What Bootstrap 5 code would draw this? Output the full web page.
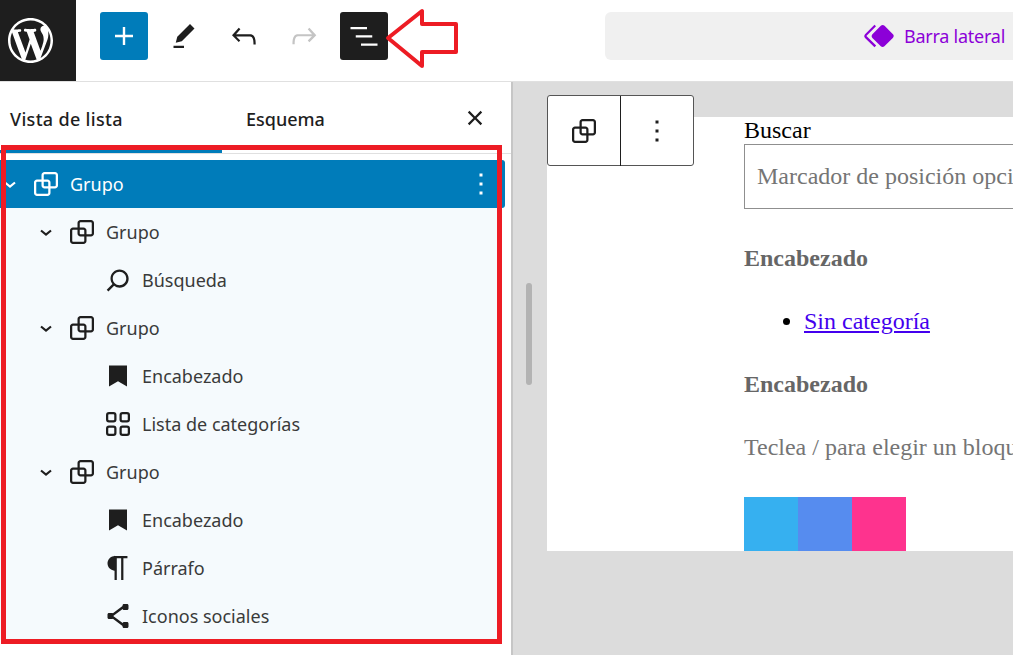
<!DOCTYPE html>
<html lang="es">
<head>
<meta charset="utf-8">
<title>Vista de lista</title>
<link href="https://cdn.jsdelivr.net/npm/bootstrap@5.3.0/dist/css/bootstrap.min.css" rel="stylesheet">
<style>
html,body{height:100%;overflow:hidden;background:#fff;}
body{font-family:"Noto Sans","Open Sans",sans-serif;color:#1e1e1e;position:relative;width:1013px;height:655px;}
svg{fill:currentColor;flex:none;display:block;}
.wp-top{height:82px;border-bottom:1px solid #e0e0e0;}
.wp-logo{width:76px;height:81px;flex:none;background:#1e1e1e;color:#fff;padding-left:8px;}
.wp-tools{padding-left:24px;gap:12px;margin-top:12px;}
.wp-tool{width:48px;height:48px;border:0;padding:0;border-radius:3px;background:transparent;color:#1e1e1e;}
.wp-tool.is-blue{background:#007cba;color:#fff;}
.wp-tool.is-dark{background:#1e1e1e;color:#fff;}
.wp-tool.is-off{color:#c4c4c4;}
.wp-command{margin:12px 0 0 217px;width:640px;height:48px;flex:none;background:#f0f0f0;border-radius:6px;color:#8c00d8;font-size:18px;letter-spacing:-.25px;padding-left:256px;gap:7px;}
.wp-main{height:573px;}
.wp-side{width:513px;flex:none;border-right:2px solid #c6c6c6;}
.wp-tabs{height:72px;border-bottom:1px solid #e0e0e0;position:relative;font-size:18px;font-weight:500;}
.wp-tab{height:71px;padding-top:21px;line-height:32px;}
.wp-tab-a{width:222px;padding-left:10px;border-bottom:3px solid #007cba;letter-spacing:.32px;}
.wp-tab-b{width:235px;padding-left:24px;}
.wp-close{width:36px;height:36px;margin-top:18px;}
.wp-list{padding-top:6px;font-size:18px;}
.wp-row{height:48px;color:#3a3a3a;}
.wp-row.is-sel{background:#007cba;color:#fff;width:505px;border-radius:0 3px 3px 0;}
.wp-tint{background:#f5fafd;width:500px;height:432px;}
.d0{padding-left:0;}
.d1{padding-left:34px;}
.d2{padding-left:100px;}
.wp-chev{width:24px;height:24px;color:#1e1e1e;fill:none;stroke:currentColor;stroke-width:2.2;}
.is-sel .wp-chev{color:#fff;margin-left:-2px;}
.wp-ic{width:36px;height:36px;color:#1e1e1e;}
.is-sel .wp-ic{color:#fff;}
.wp-chev + .wp-ic{margin-left:6px;}
.wp-lbl{padding-left:6px;}
.wp-kebab{margin-right:6px;}
.wp-canvas{flex:1 1 auto;background:#dcdcdc;position:relative;overflow:hidden;padding:35px 0 0 34px;}
.wp-page{width:700px;height:434px;background:#fff;padding-left:197px;font-family:"Liberation Serif",serif;font-size:24px;line-height:27px;color:#000;}
.wp-input{width:500px;height:65px;border:1px solid #8f8f8f;color:#757575;padding:18px 12px;margin-bottom:36px;}
.wp-head{font-weight:700;color:#666;margin-bottom:36px;}
.wp-cats{margin:0 0 36px;padding-left:60px;}
.wp-cats a{color:#4400ee;}
.wp-hint{color:#757575;margin-bottom:36px;}
.wp-soc{width:54px;height:54px;}
.wp-bar{position:absolute;left:13px;top:201px;width:6px;height:102px;border-radius:3px;background:#b3b3b3;}
.wp-blocktb{position:absolute;left:34px;top:13px;width:147px;height:71px;background:#fff;border:1px solid #555;border-radius:3px;}
.wp-blocktb > div{width:73px;height:70px;}
.wp-blocktb > div:first-child{border-right:1px solid #1e1e1e;}
.wp-frame{position:absolute;left:1px;top:145px;width:501px;height:499px;border:5px solid #ed1c24;pointer-events:none;}
.wp-arrow{position:absolute;left:380px;top:5px;fill:none;}
</style>
</head>
<body>
<svg width="0" height="0" style="position:absolute">
<defs>
<symbol id="i-group" viewBox="0 0 24 24"><path d="M18 4h-7c-1.1 0-2 .9-2 2v3H6c-1.1 0-2 .9-2 2v7c0 1.1.9 2 2 2h7c1.1 0 2-.9 2-2v-3h3c1.1 0 2-.9 2-2V6c0-1.1-.9-2-2-2zm-4.500 14c0 .3-.2.5-.5.5H6c-.3 0-.5-.2-.5-.5v-7c0-.3.2-.5.5-.5h3V13c0 1.100.9 2 2 2h2.500v3zm0-4.500H11c-.3 0-.5-.2-.5-.5v-2.500H13c.3 0 .5.2.5.5v2.500zm5-.5c0 .3-.2.5-.5.5h-3V11c0-1.100-.9-2-2-2h-2.500V6c0-.3.2-.5.5-.5h7c.3 0 .5.2.5.5v7z"/></symbol>
<symbol id="i-chev" viewBox="0 0 24 24"><path d="M7 10.500l5 4 5-4"/></symbol>
<symbol id="i-kebab" viewBox="0 0 24 24"><path d="M13 19h-2v-2h2v2zm0-6h-2v-2h2v2zm0-6h-2V5h2v2z"/></symbol>
<symbol id="i-search" viewBox="0 0 24 24"><path d="M13 5c-3.300 0-6 2.700-6 6 0 1.400.5 2.700 1.300 3.700l-3.800 3.800 1.100 1.100 3.800-3.800c1 .8 2.300 1.300 3.700 1.300 3.300 0 6-2.700 6-6S16.300 5 13 5zm0 10.500c-2.500 0-4.500-2-4.500-4.500s2-4.500 4.500-4.500 4.500 2 4.500 4.500-2 4.500-4.500 4.500z"/></symbol>
<symbol id="i-mark" viewBox="0 0 24 24"><path d="M6 5h12v14l-6-3.500L6 19z"/></symbol>
<symbol id="i-grid" viewBox="0 0 24 24"><path fill-rule="evenodd" d="M6 5.500h3a.5.5 0 01.5.5v3a.5.5 0 01-.5.5H6a.5.5 0 01-.5-.5V6a.5.5 0 01.5-.5zM4 6a2 2 0 012-2h3a2 2 0 012 2v3a2 2 0 01-2 2H6a2 2 0 01-2-2V6zm11-.5h3a.5.5 0 01.5.5v3a.5.5 0 01-.5.5h-3a.5.5 0 01-.5-.5V6a.5.5 0 01.5-.5zM13 6a2 2 0 012-2h3a2 2 0 012 2v3a2 2 0 01-2 2h-3a2 2 0 01-2-2V6zm5 8.500h-3a.5.5 0 00-.5.5v3a.5.5 0 00.5.5h3a.5.5 0 00.5-.5v-3a.5.5 0 00-.5-.5zM15 13a2 2 0 00-2 2v3a2 2 0 002 2h3a2 2 0 002-2v-3a2 2 0 00-2-2h-3zm-9 1.500h3a.5.5 0 01.5.5v3a.5.5 0 01-.5.5H6a.5.5 0 01-.5-.5v-3a.5.5 0 01.5-.5zM4 15a2 2 0 012-2h3a2 2 0 012 2v3a2 2 0 01-2 2H6a2 2 0 01-2-2v-3z"/></symbol>
<symbol id="i-para" viewBox="0 0 24 24"><path d="M18.300 4H9.900v-.1l-.9.2c-2.300.4-4 2.400-4 4.800s1.700 4.400 4 4.800l.7.1V20h1.500V5.500h2.900V20h1.500V5.500h2.700V4z"/></symbol>
<symbol id="i-share" viewBox="0 0 24 24"><path d="M9 11.800l6.100-4.500c.1.4.4.7.9.7h2c.6 0 1-.4 1-1V5c0-.6-.4-1-1-1h-2c-.6 0-1 .4-1 1v.4l-6.400 4.800c-.2-.1-.4-.2-.6-.2H6c-.6 0-1 .4-1 1v2c0 .6.4 1 1 1h2c.2 0 .4-.1.6-.2l6.400 4.800v.4c0 .6.4 1 1 1h2c.6 0 1-.4 1-1v-2c0-.6-.4-1-1-1h-2c-.5 0-.8.3-.9.7L9 12.200v-.4z"/></symbol>
</defs>
</svg>

<header class="wp-top d-flex align-items-start">
  <div class="wp-logo d-flex align-items-center">
    <svg width="45" height="45" viewBox="0 0 20 20"><path d="M20 10c0-5.510-4.490-10-10-10C4.480 0 0 4.490 0 10c0 5.520 4.480 10 10 10 5.510 0 10-4.480 10-10zM7.780 15.370L4.370 6.220c.55-.02 1.170-.08 1.170-.08.5-.06.44-1.130-.06-1.110 0 0-1.450.11-2.370.11-.18 0-.37 0-.58-.01C4.120 2.690 6.870 1.110 10 1.110c2.330 0 4.450.87 6.050 2.340-.68-.11-1.650.39-1.650 1.580 0 .74.45 1.360.9 2.100.35.61.55 1.360.55 2.460 0 1.490-1.400 5-1.400 5l-3.030-8.370c.54-.02.82-.17.82-.17.5-.05.44-1.250-.06-1.220 0 0-1.440.12-2.380.12-.87 0-2.330-.12-2.330-.12-.5-.03-.56 1.200-.06 1.220l.92.08 1.260 3.410zM17.410 10c.24-.64.74-1.870.43-4.250.7 1.290 1.050 2.710 1.050 4.250 0 3.290-1.730 6.240-4.400 7.780.97-2.590 1.940-5.200 2.920-7.780zM6.100 18.090C3.120 16.650 1.110 13.530 1.110 10c0-1.300.23-2.480.72-3.590C3.250 10.300 4.670 14.200 6.100 18.090zm4.030-6.630l2.580 6.980c-.86.29-1.760.45-2.710.45-.79 0-1.570-.11-2.290-.33.81-2.380 1.620-4.740 2.420-7.100z"/></svg>
  </div>
  <div class="wp-tools d-flex">
    <button class="wp-tool is-blue d-flex align-items-center justify-content-center" type="button" aria-label="Añadir"><svg width="36" height="36" viewBox="0 0 24 24"><path d="M18 11.200h-5.200V6h-1.600v5.200H6v1.600h5.200V18h1.600v-5.200H18z"/></svg></button>
    <button class="wp-tool d-flex align-items-center justify-content-center" type="button" aria-label="Editar"><svg width="36" height="36" viewBox="0 0 24 24"><path d="m19 7-3-3-8.500 8.500-1 4 4-1L19 7Zm-7 11.500H5V20h7v-1.500Z"/></svg></button>
    <button class="wp-tool d-flex align-items-center justify-content-center" type="button" aria-label="Deshacer"><svg width="36" height="36" viewBox="0 0 24 24"><path d="M18.300 11.700c-.6-.6-1.400-.9-2.300-.9H6.700l2.900-3.300-1.100-1-4.500 5L8.500 16l1-1-2.700-2.700H16c.5 0 .9.2 1.300.5 1 1 1 3.400 1 4.500v.3h1.500v-.2c0-1.500 0-4.300-1.500-5.700z"/></svg></button>
    <button class="wp-tool is-off d-flex align-items-center justify-content-center" type="button" aria-label="Rehacer"><svg width="36" height="36" viewBox="0 0 24 24"><path d="M15.600 6.500l-1.100 1 2.900 3.300H8c-.9 0-1.700.3-2.300.9-1.400 1.500-1.400 4.200-1.400 5.600v.2h1.500v-.3c0-1.100 0-3.500 1-4.500.3-.3.7-.5 1.300-.5h9.200L14.500 15l1.100 1.100 4.600-4.600-4.600-5z"/></svg></button>
    <button class="wp-tool is-dark d-flex align-items-center justify-content-center" type="button" aria-label="Vista de lista"><svg width="36" height="36" viewBox="0 0 24 24"><path d="M3 6h11v1.500H3V6Zm3.500 5.500h11V13h-11v-1.500ZM21 17H10v1.500h11V17Z"/></svg></button>
  </div>
  <div class="wp-command d-flex align-items-center">
    <svg width="36" height="36" viewBox="0 0 24 24"><path d="M21.300 10.800l-5.600-5.600c-.7-.7-1.800-.7-2.500 0l-5.600 5.600c-.7.7-.7 1.800 0 2.500l5.600 5.600c.3.3.8.5 1.200.5s.9-.2 1.200-.5l5.600-5.600c.8-.7.8-1.900.1-2.500zm-17.600 1L10 5.500l-1-1-6.300 6.300c-.7.7-.7 1.800 0 2.500L9 19.500l1.100-1.100-6.300-6.300c-.2 0-.2-.2-.1-.3z"/></svg>
    <span>Barra lateral</span>
  </div>
</header>

<main class="wp-main d-flex">
  <aside class="wp-side">
    <div class="wp-tabs d-flex">
      <div class="wp-tab wp-tab-a">Vista de lista</div>
      <div class="wp-tab wp-tab-b">Esquema</div>
      <div class="wp-close"><svg width="36" height="36" viewBox="0 0 24 24"><path d="M12 13.060l3.712 3.713 1.061-1.060L13.061 12l3.712-3.712-1.060-1.060L12 10.938 8.288 7.227l-1.061 1.060L10.939 12l-3.712 3.712 1.060 1.061L12 13.061z"/></svg></div>
    </div>
    <div class="wp-list">
      <div class="wp-row is-sel d-flex align-items-center d0">
        <svg class="wp-chev"><use href="#i-chev"/></svg>
        <svg class="wp-ic"><use href="#i-group"/></svg>
        <span class="wp-lbl flex-grow-1">Grupo</span>
        <svg class="wp-ic wp-kebab"><use href="#i-kebab"/></svg>
      </div>
      <div class="wp-tint">
        <div class="wp-row d-flex align-items-center d1"><svg class="wp-chev"><use href="#i-chev"/></svg><svg class="wp-ic"><use href="#i-group"/></svg><span class="wp-lbl">Grupo</span></div>
        <div class="wp-row d-flex align-items-center d2"><svg class="wp-ic"><use href="#i-search"/></svg><span class="wp-lbl">Búsqueda</span></div>
        <div class="wp-row d-flex align-items-center d1"><svg class="wp-chev"><use href="#i-chev"/></svg><svg class="wp-ic"><use href="#i-group"/></svg><span class="wp-lbl">Grupo</span></div>
        <div class="wp-row d-flex align-items-center d2"><svg class="wp-ic"><use href="#i-mark"/></svg><span class="wp-lbl">Encabezado</span></div>
        <div class="wp-row d-flex align-items-center d2"><svg class="wp-ic"><use href="#i-grid"/></svg><span class="wp-lbl">Lista de categorías</span></div>
        <div class="wp-row d-flex align-items-center d1"><svg class="wp-chev"><use href="#i-chev"/></svg><svg class="wp-ic"><use href="#i-group"/></svg><span class="wp-lbl">Grupo</span></div>
        <div class="wp-row d-flex align-items-center d2"><svg class="wp-ic"><use href="#i-mark"/></svg><span class="wp-lbl">Encabezado</span></div>
        <div class="wp-row d-flex align-items-center d2"><svg class="wp-ic"><use href="#i-para"/></svg><span class="wp-lbl">Párrafo</span></div>
        <div class="wp-row d-flex align-items-center d2"><svg class="wp-ic"><use href="#i-share"/></svg><span class="wp-lbl">Iconos sociales</span></div>
      </div>
    </div>
  </aside>
  <section class="wp-canvas">
    <div class="wp-page">
      <div>Buscar</div>
      <div class="wp-input"><span>Marcador de posición opcional…</span></div>
      <div class="wp-head">Encabezado</div>
      <ul class="wp-cats"><li><a href="#">Sin categoría</a></li></ul>
      <div class="wp-head">Encabezado</div>
      <div class="wp-hint text-nowrap">Teclea / para elegir un bloque</div>
      <div class="d-flex">
        <div class="wp-soc" style="background:#36b0f0"></div>
        <div class="wp-soc" style="background:#568cef"></div>
        <div class="wp-soc" style="background:#fe338e"></div>
      </div>
    </div>
    <div class="wp-bar"></div>
    <div class="wp-blocktb d-flex">
      <div class="d-flex align-items-center justify-content-center"><svg width="36" height="36"><use href="#i-group"/></svg></div>
      <div class="d-flex align-items-center justify-content-center"><svg width="36" height="36"><use href="#i-kebab"/></svg></div>
    </div>
  </section>
</main>

<div class="wp-frame"></div>
<svg class="wp-arrow" width="84" height="70" viewBox="380 5 84 70"><path d="M388 38 L422 11 V24 H456 V52 H422 V66 Z" stroke="#ed1c24" stroke-width="4" stroke-linejoin="round"/></svg>
</body>
</html>
